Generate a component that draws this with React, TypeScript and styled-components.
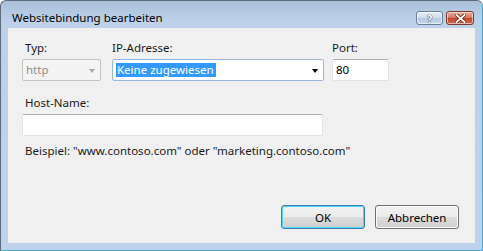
import React from "react";
import styled, { createGlobalStyle } from "styled-components";

const Global = createGlobalStyle`
  html, body { margin: 0; padding: 0; background: #ffffff; }
  body { font-family: "Noto Sans", "Open Sans", sans-serif; font-size: 11.5px; }
  * { box-sizing: border-box; }
`;

const Window = styled.div`
  width: 483px;
  height: 251px;
  border: 1px solid #5d6b7a;
  border-right-color: #4aa8c8;
  border-bottom-color: #4aa8c8;
  border-radius: 6px 6px 0 0;
  background: linear-gradient(to bottom, #a9bfd8 0px, #bdd2ea 20px, #bed3eb 100%);
  display: flex;
  flex-direction: column;
  overflow: hidden;
`;

const TitleBar = styled.div`
  height: 27px;
  display: flex;
  align-items: flex-start;
  padding: 0 8px 0 11px;
`;

const Title = styled.div`
  flex: 1;
  color: #000;
  font-size: 11.5px;
  line-height: 16px;
  margin-top: 9px;
  white-space: nowrap;
`;

const CaptionButtons = styled.div`
  display: flex;
  gap: 3px;
  margin-top: 10px;
`;

const CaptionButton = styled.div<{ $close?: boolean }>`
  width: ${(p) => (p.$close ? "28px" : "27px")};
  height: 14px;
  border: 1px solid ${(p) => (p.$close ? "#7a3a32" : "#6d7f96")};
  border-radius: 3px;
  background: ${(p) =>
    p.$close
      ? "linear-gradient(to bottom, #e8a596 0%, #d6806c 45%, #c1452e 50%, #cd6a4e 100%)"
      : "linear-gradient(to bottom, #e6eef7 0%, #d2dfee 45%, #b6c9e0 50%, #c6d7ea 100%)"};
  box-shadow: inset 0 0 0 1px rgba(255, 255, 255, 0.55);
  display: flex;
  align-items: center;
  justify-content: center;
`;

const HelpGlyph = styled.span`
  color: #fff;
  font-weight: 700;
  font-size: 11px;
  line-height: 11px;
  text-shadow: 0 0 1px #334, 0 0 1px #334;
`;

const Client = styled.div`
  flex: 1;
  margin: 0 7px 7px 7px;
  background: #f0f0f0;
  display: flex;
  flex-direction: column;
  padding: 12px 0 14px 14px;
`;

const TopRow = styled.div`
  display: flex;
`;

const Field = styled.div<{ $w: number; $ml?: number }>`
  display: flex;
  flex-direction: column;
  width: ${(p) => p.$w}px;
  margin-left: ${(p) => p.$ml ?? 0}px;
`;

const Label = styled.div<{ $indent?: number }>`
  color: #1a1a1a;
  line-height: 16px;
  padding-left: ${(p) => p.$indent ?? 0}px;
  margin-bottom: 3px;
  white-space: nowrap;
`;

const Combo = styled.div<{ $disabled?: boolean }>`
  height: 22px;
  border: 1px solid ${(p) => (p.$disabled ? "#c3c3c3" : "#98b7dc")};
  border-radius: 2px;
  background: ${(p) => (p.$disabled ? "#f4f4f4" : "#ffffff")};
  display: flex;
  align-items: center;
  padding: 0 5px 0 3px;
  color: ${(p) => (p.$disabled ? "#8e8e8e" : "#000")};
`;

const ComboText = styled.span<{ $selected?: boolean }>`
  flex: 1;
  line-height: 14px;
  ${(p) =>
    p.$selected
      ? `
    flex: 0 0 auto;
    background: #3399ff;
    color: #ffffff;
    padding: 0 2px 0 1px;
  `
      : ""}
`;

const Spacer = styled.div`
  flex: 1;
`;

const Arrow = styled.div<{ $disabled?: boolean }>`
  width: 0;
  height: 0;
  border-left: 3.5px solid transparent;
  border-right: 3.5px solid transparent;
  border-top: 4px solid ${(p) => (p.$disabled ? "#a6a6a6" : "#000")};
  margin-top: 1px;
`;

const TextBox = styled.div<{ $w: number }>`
  width: ${(p) => p.$w}px;
  height: 22px;
  border: 1px solid #e2e3ea;
  border-top-color: #abadb3;
  border-radius: 2px;
  background: #ffffff;
  display: flex;
  align-items: center;
  padding: 0 3px;
  color: #000;
  line-height: 14px;
`;

const HostField = styled.div`
  display: flex;
  flex-direction: column;
  margin-top: 14px;
`;

const Hint = styled.div`
  color: #1a1a1a;
  margin-top: 7px;
  padding-left: 3px;
  line-height: 16px;
  white-space: nowrap;
`;

const ButtonRow = styled.div`
  margin-top: auto;
  display: flex;
  justify-content: flex-end;
  gap: 10px;
  padding-right: 16px;
`;

const Button = styled.button<{ $default?: boolean }>`
  width: 84px;
  height: 24px;
  font-family: inherit;
  font-size: 11.5px;
  color: #000;
  border: 1px solid ${(p) => (p.$default ? "#3c7fb1" : "#707070")};
  border-radius: 3px;
  background: linear-gradient(to bottom, #f2f2f2 0%, #ebebeb 49%, #dddddd 50%, #cfcfcf 100%);
  box-shadow: inset 0 0 0 1px ${(p) => (p.$default ? "#48d8fb" : "#fcfcfc")};
  padding: 0;
`;

export default function App() {
  return (
    <>
      <Global />
      <Window>
        <TitleBar>
          <Title>Websitebindung bearbeiten</Title>
          <CaptionButtons>
            <CaptionButton>
              <HelpGlyph>?</HelpGlyph>
            </CaptionButton>
            <CaptionButton $close>
              <svg width="11" height="9" viewBox="0 0 11 9">
                <path d="M1.5 1 L9.5 8 M9.5 1 L1.5 8" stroke="#5a1a12" strokeWidth="3.2" strokeLinecap="square" />
                <path d="M1.5 1 L9.5 8 M9.5 1 L1.5 8" stroke="#ffffff" strokeWidth="1.8" strokeLinecap="square" />
              </svg>
            </CaptionButton>
          </CaptionButtons>
        </TitleBar>
        <Client>
          <TopRow>
            <Field $w={79}>
              <Label $indent={3}>Typ:</Label>
              <Combo $disabled>
                <ComboText>http</ComboText>
                <Arrow $disabled />
              </Combo>
            </Field>
            <Field $w={212} $ml={11}>
              <Label $indent={-1}>IP-Adresse:</Label>
              <Combo>
                <ComboText $selected>Keine zugewiesen</ComboText>
                <Spacer />
                <Arrow />
              </Combo>
            </Field>
            <Field $w={57} $ml={8}>
              <Label>Port:</Label>
              <TextBox $w={57}>80</TextBox>
            </Field>
          </TopRow>
          <HostField>
            <Label $indent={3}>Host-Name:</Label>
            <TextBox $w={301} />
          </HostField>
          <Hint>Beispiel: "www.contoso.com" oder "marketing.contoso.com"</Hint>
          <ButtonRow>
            <Button $default>OK</Button>
            <Button>Abbrechen</Button>
          </ButtonRow>
        </Client>
      </Window>
    </>
  );
}
